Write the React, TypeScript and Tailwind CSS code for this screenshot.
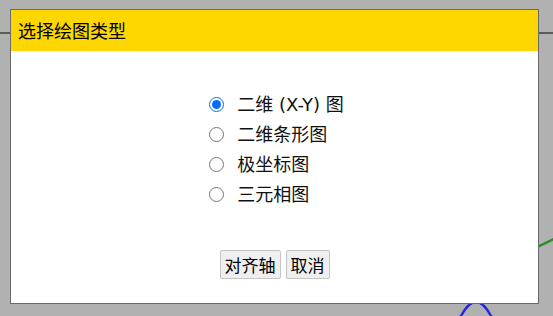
import React, { useState } from 'react';

const options = ['二维 (X-Y) 图', '二维条形图', '极坐标图', '三元相图'];

const font = { fontFamily: '"Noto Sans CJK SC", "Noto Sans", sans-serif' };
const itemFont = { fontFamily: '"DejaVu Sans", "Noto Sans CJK SC", sans-serif' };

export default function App() {
  const [selected, setSelected] = useState(0);

  return (
    <div className="relative w-[553px] h-[316px] bg-[#b1b1b1] overflow-hidden" style={font}>
      {/* plot behind the dialog */}
      <svg className="absolute inset-0" width="553" height="316" viewBox="0 0 553 316">
        <line x1="0" y1="33" x2="553" y2="33" stroke="#5a5a5a" strokeWidth="2" />
        <line x1="500" y1="265" x2="556" y2="238" stroke="#2e8b2e" strokeWidth="2.5" />
        <path d="M458 322 Q476 282 494 322" fill="none" stroke="#2828d8" strokeWidth="2.5" />
      </svg>

      <div className="absolute left-[10px] top-[9px] w-[529px] h-[295px] bg-white border border-[#6a6a6a] flex flex-col">
        <div className="h-[41px] bg-[#ffd700] px-[7px] flex items-center text-[18px] text-black">
          选择绘图类型
        </div>

        <div className="flex-1 flex flex-col items-center">
          <div className="mt-[38px] flex flex-col ml-[4px]">
            {options.map((label, i) => (
              <label
                key={label}
                className="h-[30px] flex items-center gap-[13px] text-[18px] text-[#111] cursor-pointer"
                style={itemFont}
              >
                <input
                  type="radio"
                  name="plot"
                  checked={selected === i}
                  onChange={() => setSelected(i)}
                  className="w-[15px] h-[15px] m-0 accent-[#0a6cff]"
                />
                <span>{label}</span>
              </label>
            ))}
          </div>

          <div className="mt-[41px] flex gap-[5px]">
            <button className="h-[29px] px-[4px] text-[17px] leading-none text-black bg-[#efefef] border border-[#c4c4c4] rounded-[2px]">
              对齐轴
            </button>
            <button className="h-[29px] px-[4px] text-[17px] leading-none text-black bg-[#efefef] border border-[#c4c4c4] rounded-[2px]">
              取消
            </button>
          </div>
        </div>
      </div>
    </div>
  );
}
